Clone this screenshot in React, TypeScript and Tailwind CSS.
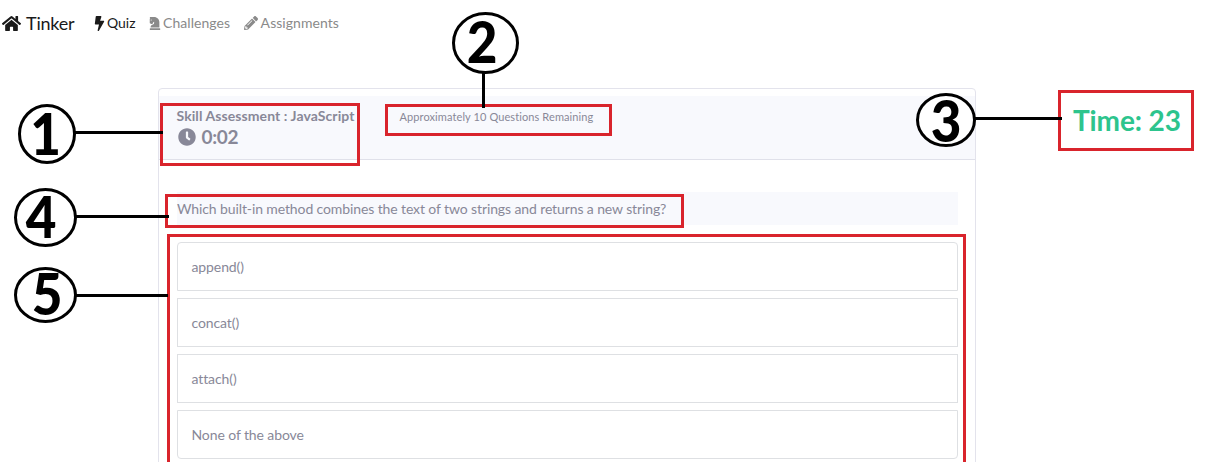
import React from "react";
import { FaBolt, FaChessKnight, FaClock, FaHome, FaPencilAlt } from "react-icons/fa";

const options = ["append()", "concat()", "attach()", "None of the above"];

const frames = [
  { x: 160, y: 103, w: 200, h: 63 },
  { x: 385, y: 104, w: 227, h: 32 },
  { x: 1058, y: 90, w: 136, h: 61 },
  { x: 165, y: 194, w: 519, h: 34 },
  { x: 167, y: 234, w: 799, h: 260 },
];

const callouts = [
  { label: "1", x: 18, y: 104, w: 58, h: 60, tx: 45.5, ty: 155, line: [75, 132.5, 163, 132.5] },
  { label: "2", x: 452, y: 12, w: 67, h: 62, tx: 482, ty: 63, line: [483.5, 72, 483.5, 108] },
  { label: "3", x: 916, y: 93, w: 60, h: 54, tx: 946, ty: 142, line: [975, 118.5, 1062, 118.5] },
  { label: "4", x: 14, y: 188, w: 63, h: 59, tx: 41, ty: 238, line: [76, 216.5, 169, 216.5] },
  { label: "5", x: 14, y: 267, w: 63, h: 56, tx: 47, ty: 315, line: [76, 295.5, 168, 295.5] },
];

function Navbar() {
  return (
    <nav className="flex h-[46px] items-center pl-[2px] text-[#8a8a8a]">
      <a className="flex items-center gap-[5px] text-lg tracking-[-0.2px] text-[#1a1a1a]">
        <FaHome className="size-[19px]" />
        Tinker
      </a>
      <a className="ml-[19.5px] flex items-center gap-[2px] text-sm text-[#1a1a1a]">
        <FaBolt className="h-[15px] w-[11px]" />
        Quiz
      </a>
      <a className="ml-[13px] flex items-center gap-[2.5px] text-sm tracking-[0.05px]">
        <FaChessKnight className="h-[14px] w-[12px]" />
        Challenges
      </a>
      <a className="ml-[14px] flex items-center gap-[2.5px] text-sm tracking-[0.05px]">
        <FaPencilAlt className="size-[14px]" />
        Assignments
      </a>
    </nav>
  );
}

function Annotations() {
  return (
    <svg className="pointer-events-none absolute inset-0" width="1208" height="462" viewBox="0 0 1208 462">
      {frames.map((f) => (
        <rect key={f.x} x={f.x + 1.5} y={f.y + 1.5} width={f.w - 3} height={f.h - 3} fill="none" stroke="#d9242c" strokeWidth="3" />
      ))}
      {callouts.map((c) => (
        <g key={c.label}>
          <ellipse cx={c.x + c.w / 2} cy={c.y + c.h / 2} rx={c.w / 2 - 1.5} ry={c.h / 2 - 1.5} fill="#fff" stroke="#000" strokeWidth="3" />
          <line x1={c.line[0]} y1={c.line[1]} x2={c.line[2]} y2={c.line[3]} stroke="#000" strokeWidth="3" />
          <text transform={`translate(${c.tx} ${c.ty}) scale(0.93 1)`} textAnchor="middle" fontSize="57" className="font-black">
            {c.label}
          </text>
        </g>
      ))}
    </svg>
  );
}

export default function App() {
  return (
    <div className="relative h-[462px] w-[1208px] overflow-hidden bg-white font-['Lato',sans-serif] text-[#888898]">
      <Navbar />
      <div className="mt-[42px] flex items-start">
        <main className="ml-[158px] h-[400px] w-[818px] shrink-0 rounded-t border border-[#e3e3ec] pt-[7px]">
          <header className="flex h-[64px] border-b border-[#e0e1ea] bg-[#f8f9fd] pl-[17.5px]">
            <div className="w-[223px] pt-[10px] font-bold">
              <h1 className="text-sm leading-5 tracking-[0.08px]">Skill Assessment : JavaScript</h1>
              <div className="mt-[1px] flex items-center gap-[6px] pl-[1px] text-[19px] leading-5 tracking-[-0.3px]">
                <FaClock className="size-[18px]" />
                0:02
              </div>
            </div>
            <p className="pt-[12px] text-[11px] leading-[18px] tracking-[0.1px]">Approximately 10 Questions Remaining</p>
          </header>
          <section className="pl-[18px] pr-[17px] pt-8">
            <h2 className="h-[33px] bg-[#f8f9fd] text-sm leading-[34px] tracking-[-0.11px]">
              Which built-in method combines the text of two strings and returns a new string?
            </h2>
            <ul className="mt-[17px] flex flex-col gap-[7px]">
              {options.map((o) => (
                <li
                  key={o}
                  className="flex h-[49px] items-center border border-[#dee0e3] pl-[13.5px] text-sm tracking-[-0.1px] first:rounded-t last:rounded-b"
                >
                  {o}
                </li>
              ))}
            </ul>
          </section>
        </main>
        <div className="ml-[97px] mt-[13px] text-[28px] leading-[38px] font-bold tracking-[-0.1px] text-[#2dc48d]">Time: 23</div>
      </div>
      <Annotations />
    </div>
  );
}
